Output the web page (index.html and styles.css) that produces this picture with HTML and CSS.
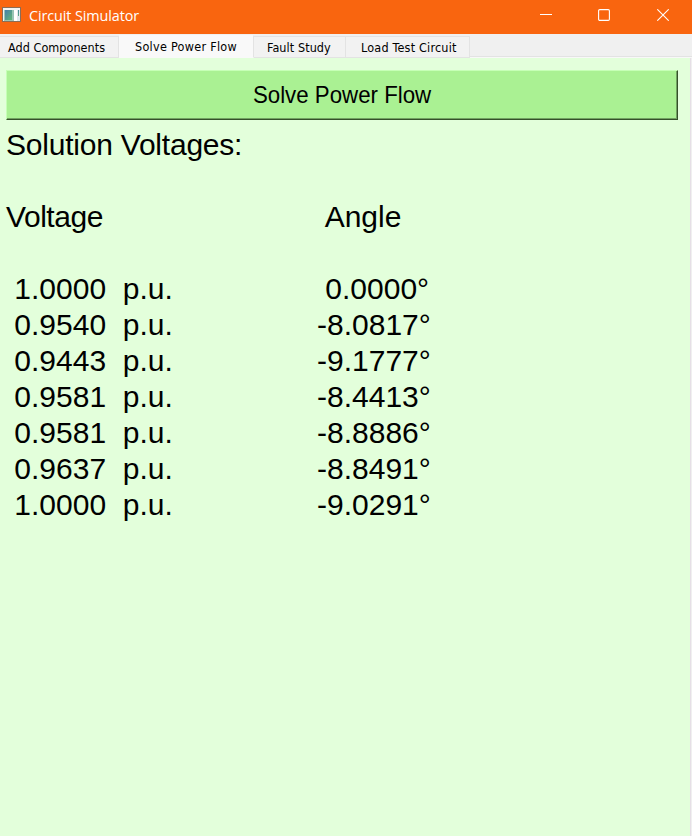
FILE: index.html
```html
<!DOCTYPE html>
<html lang="en">
<head>
<meta charset="utf-8">
<title>Circuit Simulator</title>
<link rel="stylesheet" href="styles.css">
</head>
<body>
<header class="titlebar">
  <svg class="app-icon" width="19" height="16" viewBox="0 0 19 16">
    <defs><linearGradient id="g" x1="0" y1="0" x2="1" y2="1"><stop offset="0" stop-color="#477eaa"/><stop offset="1" stop-color="#62b776"/></linearGradient></defs>
    <rect x="0" y="0" width="19" height="15" fill="#8b6d57"/>
    <rect x="1" y="1" width="17" height="13" fill="#f3f3f1"/>
    <rect x="2" y="3" width="10" height="11" fill="#99c4b5"/>
    <rect x="3" y="3" width="7" height="10" fill="url(#g)"/>
    <rect x="12" y="3" width="3" height="11" fill="#fff"/>
    <rect x="15" y="3" width="3" height="11" fill="#e1e8ed"/>
    <rect x="16" y="3" width="1" height="6" fill="url(#g)"/>
  </svg>
  <span class="title">Circuit Simulator</span>
  <div class="controls">
    <svg width="12" height="12" viewBox="0 0 12 12"><path d="M0 5.5h12" stroke="#fff"/></svg>
    <svg width="12" height="12" viewBox="0 0 12 12"><rect x=".6" y=".6" width="10.8" height="10.8" rx="1.2" fill="none" stroke="#fff" stroke-width="1.1"/></svg>
    <svg class="close" width="12" height="12" viewBox="0 0 12 12"><path d="M.3.3l11.4 11.4M11.7.3L.3 11.7" stroke="#fff" stroke-width="1.1"/></svg>
  </div>
</header>
<nav class="tabs">
  <div class="tab first">Add Components</div>
  <div class="tab active">Solve Power Flow</div>
  <div class="tab fault">Fault Study</div>
  <div class="tab load">Load Test Circuit</div>
</nav>
<main class="page">
  <button class="solve"><span>Solve Power Flow</span></button>
  <div class="results">
    <div class="heading">Solution Voltages:</div>
    <div class="row head"><span class="voltage">Voltage</span><span class="angle"> Angle</span></div>
    <div class="row"><span> 1.0000  p.u.</span><span> 0.0000°</span></div>
    <div class="row"><span> 0.9540  p.u.</span><span>-8.0817°</span></div>
    <div class="row"><span> 0.9443  p.u.</span><span>-9.1777°</span></div>
    <div class="row"><span> 0.9581  p.u.</span><span>-8.4413°</span></div>
    <div class="row"><span> 0.9581  p.u.</span><span>-8.8886°</span></div>
    <div class="row"><span> 0.9637  p.u.</span><span>-8.8491°</span></div>
    <div class="row"><span> 1.0000  p.u.</span><span>-9.0291°</span></div>
  </div>
</main>
</body>
</html>
```
FILE: styles.css
```css
* { box-sizing: border-box; }
body {
  margin: 0;
  height: 836px;
  display: flex;
  flex-direction: column;
  overflow: hidden;
  background: #f0f0f0;
  color: #000;
  font-family: "Liberation Sans", Arial, sans-serif;
}
.titlebar {
  height: 34px;
  flex: none;
  display: flex;
  align-items: flex-start;
  background: #f9650f;
  color: #fff;
}
.app-icon { margin: 7px 0 0 2px; }
.title {
  margin-left: 8px;
  font: 14.4px/32px "Open Sans", "Noto Sans", sans-serif;
  letter-spacing: -0.1px;
}
.controls {
  margin: 9px 23px 0 auto;
  display: flex;
  gap: 46px;
}
.controls svg { display: block; }
.controls .close { margin-left: 1px; }
.tabs {
  height: 24px;
  flex: none;
  display: flex;
  align-items: flex-start;
  padding-top: 2px;
  border-bottom: 1px solid #f8f8f8;
  box-shadow: inset 0 -1px #e3e3e3;
  font: 12.5px/20px "DejaVu Sans Condensed", "DejaVu Sans", sans-serif;
  white-space: nowrap;
}
.tab {
  height: 22px;
  border: 1px solid #e3e3e3;
  border-left: 0;
  background: #f2f2f2;
  line-height: 22px;
}
.first { width: 119px; padding-left: 8px; letter-spacing: 0.04px; }
.active {
  width: 135px;
  height: 23px;
  margin-top: -1px;
  padding-left: 16px;
  border-color: #f9f9f9;
  border-right-color: #e3e3e3;
  background: #f9f9f9;
  letter-spacing: 0.28px;
}
.fault { width: 92px; padding-left: 13px; letter-spacing: 0.08px; }
.load { width: 124px; padding-left: 15px; letter-spacing: 0.2px; }
.page {
  flex: 1;
  margin-right: 1px;
  padding: 12px 12px 0 6px;
  border-right: 1px solid #e6dfe6;
  background: #e3ffdb;
}
.solve {
  display: block;
  width: 672px;
  height: 50px;
  padding: 0;
  border: 1px solid;
  border-color: #c6ffb6 #355029 #355029 #c6ffb6;
  box-shadow: inset -1px -1px #71a061;
  background: #aaf193;
  color: #000;
  font: 24px "Liberation Sans", Arial, sans-serif;
}
.solve span { display: inline-block; transform: scaleX(0.928); }
.results {
  margin-top: 7px;
  font-size: 30px;
  line-height: 36px;
}
.heading { letter-spacing: -0.22px; }
.voltage { letter-spacing: -0.45px; }
.row { display: grid; grid-template-columns: 311px 1fr; }
.row span { white-space: pre; }
.row .angle { padding-left: 1px; }
.head { margin: 36px 0; }
```
